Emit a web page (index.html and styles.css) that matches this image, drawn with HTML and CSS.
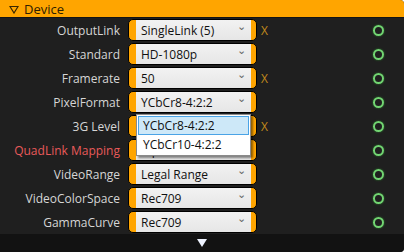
FILE: index.html
```html
<!DOCTYPE html>
<html lang="en">
	<head>
		<meta charset="UTF-8" />
		<title>Device</title>
		<link rel="stylesheet" href="styles.css">
	</head>
	<body>
		<div class="panel">
			<div class="header">
				<svg class="caret" width="10" height="9" viewBox="0 0 10 9"><path d="M1 1.5 H9 L5 8 Z" fill="none" stroke="#3a2800" stroke-width="1.2"/></svg>
				<span>Device</span>
			</div>

			<div class="rows">
				<div class="row">
					<span class="label">OutputLink</span>
					<div class="combo"><span class="value">SingleLink (5)</span><span class="chev">&#8964;</span></div>
					<span class="mark">X</span>
					<span class="status"></span>
				</div>
				<div class="row">
					<span class="label">Standard</span>
					<div class="combo"><span class="value">HD-1080p</span><span class="chev">&#8964;</span></div>
					<span class="mark"></span>
					<span class="status"></span>
				</div>
				<div class="row">
					<span class="label">Framerate</span>
					<div class="combo"><span class="value">50</span><span class="chev">&#8964;</span></div>
					<span class="mark">X</span>
					<span class="status"></span>
				</div>
				<div class="row">
					<span class="label">PixelFormat</span>
					<div class="combo"><span class="value">YCbCr8-4:2:2</span><span class="chev">&#8964;</span></div>
					<span class="mark"></span>
					<span class="status"></span>
				</div>
				<div class="row">
					<span class="label">3G Level</span>
					<!-- value hidden under the open list -->
					<div class="combo"><span class="value"></span></div>
					<span class="mark">X</span>
					<span class="status"></span>
				</div>
				<div class="row">
					<span class="label warn">QuadLink Mapping</span>
					<div class="combo"><span class="value">Square Division</span><span class="chev">&#8964;</span></div>
					<span class="mark"></span>
					<span class="status"></span>
				</div>
				<div class="row">
					<span class="label">VideoRange</span>
					<div class="combo"><span class="value">Legal Range</span><span class="chev">&#8964;</span></div>
					<span class="mark"></span>
					<span class="status"></span>
				</div>
				<div class="row">
					<span class="label">VideoColorSpace</span>
					<div class="combo"><span class="value">Rec709</span><span class="chev">&#8964;</span></div>
					<span class="mark"></span>
					<span class="status"></span>
				</div>
				<div class="row">
					<span class="label">GammaCurve</span>
					<div class="combo"><span class="value">Rec709</span><span class="chev">&#8964;</span></div>
					<span class="mark"></span>
					<span class="status"></span>
				</div>
			</div>

			<div class="footer">
				<svg width="10" height="8" viewBox="0 0 10 8"><path d="M0 0 H10 L5 8 Z" fill="#eef3ff"/></svg>
			</div>

			<!-- open list of PixelFormat -->
			<div class="popup">
				<div class="item selected">YCbCr8-4:2:2</div>
				<div class="item">YCbCr10-4:2:2</div>
			</div>
		</div>
	</body>
</html>
```

FILE: styles.css
```css
* {
	margin: 0;
	padding: 0;
	box-sizing: border-box;
}

html, body {
	width: 100%;
	height: 100%;
	background: #ffffff;
}

body {
	font-family: "Open Sans", "Noto Sans", sans-serif;
	font-size: 12px;
}

.panel {
	position: relative;
	width: 404px;
	height: 252px;
	background: #1f1f1f;
	border-radius: 0 4px 4px 0;
	overflow: hidden;
	display: flex;
	flex-direction: column;
}

.header {
	height: 18px;
	background: #ffa500;
	color: #2e2000;
	font-size: 13px;
	display: flex;
	align-items: center;
	gap: 5px;
	padding-left: 9px;
	border-bottom: 1px solid #141414;
	flex: none;
}

.caret {
	margin-top: 1px;
}

.rows {
	flex: 1;
	display: flex;
	flex-direction: column;
	gap: 2px;
	padding-top: 1px;
}

.row {
	height: 22px;
	display: flex;
	align-items: center;
}

.label {
	width: 120px;
	text-align: right;
	color: #d6d6d6;
	margin-right: 8px;
	white-space: nowrap;
}

.label.warn {
	color: #e85a5a;
}

.combo {
	width: 129px;
	height: 22px;
	display: flex;
	background: #ffa500;
	border: 1px solid #000;
	border-radius: 5px;
	padding: 0 5px 0 7px;
}

.value {
	flex: 1;
	display: flex;
	align-items: center;
	padding-left: 5px;
	background: linear-gradient(#f2f2f2, #e6e6e6);
	color: #101010;
	white-space: nowrap;
	overflow: hidden;
}

.chev {
	position: relative;
	width: 0;
	left: -14px;
	top: -2px;
	color: #666;
	font-size: 11px;
}

.mark {
	width: 10px;
	margin-left: 4px;
	color: #c28a1c;
	font-size: 12px;
}

.status {
	width: 11px;
	height: 11px;
	margin-left: 102px;
	border: 2px solid #72d572;
	border-radius: 50%;
	box-shadow: 0 0 2px #2f8f2f;
}

.footer {
	height: 18px;
	background: #121212;
	display: flex;
	justify-content: center;
	align-items: center;
	flex: none;
}

.popup {
	position: absolute;
	left: 136px;
	top: 114px;
	width: 115px;
	background: #ffffff;
	border: 1px solid #8a8a8a;
	box-shadow: 2px 2px 2px rgba(0, 0, 0, 0.45);
	padding: 1px;
}

.item {
	height: 19px;
	line-height: 17px;
	padding-left: 4px;
	color: #101010;
	border: 1px solid transparent;
}

.item.selected {
	background: #cde8f8;
	border-color: #4aa3e6;
}
```
